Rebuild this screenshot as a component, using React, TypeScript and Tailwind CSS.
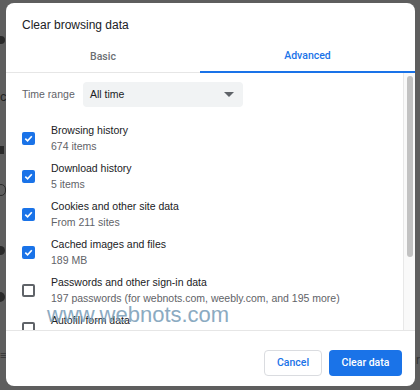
import React from "react";

const items: { title: string; sub: string; checked: boolean }[] = [
  { title: "Browsing history", sub: "674 items", checked: true },
  { title: "Download history", sub: "5 items", checked: true },
  { title: "Cookies and other site data", sub: "From 211 sites", checked: true },
  { title: "Cached images and files", sub: "189 MB", checked: true },
  {
    title: "Passwords and other sign-in data",
    sub: "197 passwords (for webnots.com, weebly.com, and 195 more)",
    checked: false,
  },
  { title: "Autofill form data", sub: "", checked: false },
];

function Checkbox({ checked }: { checked: boolean }) {
  if (checked) {
    return (
      <div className="w-[13px] h-[13px] rounded-[2px] bg-[#1a73e8] flex items-center justify-center shrink-0">
        <svg width="11" height="11" viewBox="0 0 12 12">
          <path d="M2.5 6.2 L5 8.6 L9.6 3.6" fill="none" stroke="#fff" strokeWidth="1.8" />
        </svg>
      </div>
    );
  }
  return <div className="w-[13px] h-[13px] rounded-[2px] border-2 border-[#5f6368] shrink-0" />;
}

const medium = { fontFamily: "Roboto, 'Liberation Sans', sans-serif" };

export default function App() {
  return (
    <div
      className="relative w-[420px] h-[390px] bg-[#5e5e5e] overflow-hidden pt-[3px] pl-[6px]"
      style={{ fontFamily: "'Liberation Sans', Arial, sans-serif" }}
    >
      {/* background page slivers */}
      <div className="absolute left-0 top-[36px] w-[5px] h-[8px] rounded-r-full bg-[#2a2a2a]" />
      <div className="absolute left-0 top-[90px] text-[13px] leading-none text-[#222]">c</div>
      <div className="absolute left-0 top-[146px] w-[4px] h-[8px] bg-[#2a2a2a]" />
      <div className="absolute left-[-4px] top-[184px] w-[10px] h-[12px] rounded-full border border-[#2a2a2a]" />
      <div className="absolute left-0 top-[246px] w-[5px] h-[9px] rounded-r-full bg-[#2a2a2a]" />
      <div className="absolute left-0 top-[292px] w-[5px] h-[10px] rounded-r-full bg-[#2a2a2a]" />
      <div className="absolute left-0 top-[350px] text-[11px] leading-none text-[#333]">≡</div>
      <div className="absolute left-[416px] top-[354px] text-[12px] leading-none text-[#333]">r</div>

      <div className="relative w-[409px] h-[383px] bg-white rounded-[8px] flex flex-col overflow-hidden">
        <div className="pt-[12px] pl-[16px] h-[35px] text-[12px] leading-[20px] text-[#202124]">
          Clear browsing data
        </div>
        <div
          className="mt-[3px] h-[32px] flex border-b border-[#e6e6e6] text-[10.5px] font-medium"
          style={medium}
        >
          <div className="w-[194px] flex items-center justify-center text-[#6b6f73]">Basic</div>
          <div className="flex-1 flex items-center justify-center text-[#1a73e8] border-b-2 border-[#1a73e8] mb-[-1px]">
            Advanced
          </div>
        </div>
        <div className="h-[257px] flex overflow-hidden">
          <div className="flex-1 overflow-hidden">
            <div className="mt-[9px] flex items-center pl-[16px]">
              <div className="w-[61px] text-[10.5px] text-[#5f6368] whitespace-nowrap">Time range</div>
              <div className="w-[160px] h-[25px] rounded-[4px] bg-[#f1f3f4] flex items-center justify-between pl-[7px] pr-[9px] text-[10.5px] text-[#202124]">
                <span>All time</span>
                <svg width="10" height="5" viewBox="0 0 10 5">
                  <path d="M0 0 L10 0 L5 5 Z" fill="#5f6368" />
                </svg>
              </div>
            </div>
            <div className="mt-[12px] flex flex-col">
              {items.map((it) => (
                <div key={it.title} className="h-[38px] flex items-center pl-[16px] gap-[16px] shrink-0">
                  <Checkbox checked={it.checked} />
                  <div className="flex flex-col text-[10.5px] leading-[16px] whitespace-nowrap">
                    <span className="text-[#202124]">{it.title}</span>
                    <span className="text-[#5f6368]">{it.sub || "\u00a0"}</span>
                  </div>
                </div>
              ))}
            </div>
          </div>
          <div className="w-[12px] bg-[#f9f9f9] border-l border-[#e8e8e8] flex justify-center">
            <div className="mt-[3px] w-[6px] h-[181px] rounded-full bg-[#c2c2c2]" />
          </div>
        </div>
        <div
          className="flex-1 border-t border-[#e6e6e6] flex justify-end items-start pt-[19px] pr-[13px] gap-[7px] text-[10.5px] font-medium"
          style={medium}
        >
          <div className="w-[58px] h-[26px] rounded-[4px] border border-[#dadce0] text-[#1a73e8] flex items-center justify-center">
            Cancel
          </div>
          <div className="w-[73px] h-[26px] rounded-[4px] bg-[#1a73e8] text-white flex items-center justify-center">
            Clear data
          </div>
        </div>

        <div className="absolute left-[41px] top-[301px] text-[22px] leading-none text-[#7fa2bb] opacity-90 pointer-events-none">
          www.webnots.com
        </div>
      </div>
    </div>
  );
}
